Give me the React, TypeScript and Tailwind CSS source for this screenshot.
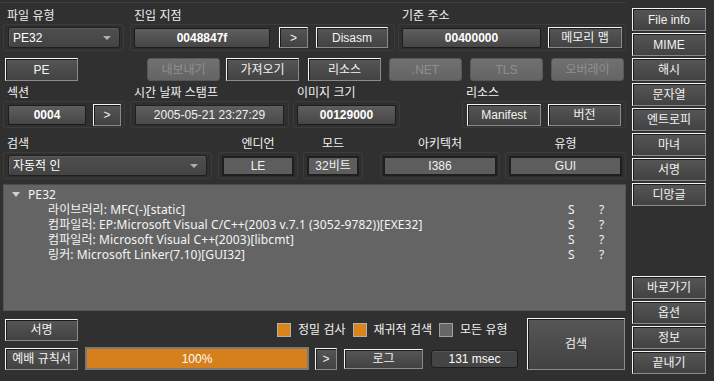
import React from 'react';

const FONT = "font-['Liberation_Sans','Noto_Sans_CJK_KR',sans-serif]";

function Btn({ children, className = '' }: { children: React.ReactNode; className?: string }) {
  return (
    <div className={`flex items-center justify-center shrink-0 border border-t-[#f4f4f4] border-l-[#f4f4f4] border-r-[#8a8a8a] border-b-[#8a8a8a] bg-gradient-to-b from-[#565656] to-[#424242] shadow-[inset_1px_1px_0_#1c1c1c] text-[12px] text-[#f2f2f2] leading-none ${className}`}>
      {children}
    </div>
  );
}

function Off({ children, className = '' }: { children: React.ReactNode; className?: string }) {
  return (
    <div className={`flex items-center justify-center shrink-0 rounded-[3px] border border-[#585858] bg-gradient-to-b from-[#717171] to-[#646464] text-[12px] text-[#8f8f8f] leading-none ${className}`}>
      {children}
    </div>
  );
}

function Edit({ children, className = '' }: { children: React.ReactNode; className?: string }) {
  return (
    <div className={`flex items-center justify-center shrink-0 rounded-[2px] border border-[#1c1c1c] bg-gradient-to-b from-[#5e5e5e] to-[#464646] text-[12px] font-bold text-white leading-none ${className}`}>
      {children}
    </div>
  );
}

function Ro({ children, className = '' }: { children: React.ReactNode; className?: string }) {
  return (
    <div className={`flex items-center justify-center shrink-0 border-2 border-[#1f1f1f] bg-[#5d5d5d] text-[12px] text-[#f0f0f0] leading-none ${className}`}>
      {children}
    </div>
  );
}

function Combo({ children, className = '' }: { children: React.ReactNode; className?: string }) {
  return (
    <div className={`flex items-center shrink-0 rounded-[3px] border border-[#1f1f1f] bg-gradient-to-b from-[#4f4f4f] to-[#434343] shadow-[inset_1px_1px_0_#5c5c5c] text-[12px] text-white pl-[4px] pr-[8px] leading-none ${className}`}>
      <span className="flex-1">{children}</span>
      <span className="w-0 h-0 border-l-[4px] border-r-[4px] border-t-[4px] border-l-transparent border-r-transparent border-t-[#b0b0b0]" />
    </div>
  );
}

function Group({ label, center, className = '', children }: { label: string; center?: boolean; className?: string; children: React.ReactNode }) {
  return (
    <div className={`shrink-0 ${className}`}>
      <div className={`h-[15px] leading-[15px] text-[12px] text-[#f0f0f0] ${center ? 'text-center' : 'pl-[4px]'}`}>{label}</div>
      <div className="h-[27px] flex items-center rounded-[3px] border border-[#3c3c3c]">{children}</div>
    </div>
  );
}

function Check({ on, label, className = '' }: { on: boolean; label: string; className?: string }) {
  return (
    <div className={`flex items-center shrink-0 ${className}`}>
      <span className={`w-[14px] h-[14px] border ${on ? 'bg-[#d9841c] border-[#b0b0b0]' : 'bg-[#666666] border-[#a0a0a0]'}`} />
      <span className="ml-[7px] text-[12px] text-[#f0f0f0] leading-none">{label}</span>
    </div>
  );
}

const rows = [
  '라이브러리: MFC(-)[static]',
  '컴파일러: EP:Microsoft Visual C/C++(2003 v.7.1 (3052-9782))[EXE32]',
  '컴파일러: Microsoft Visual C++(2003)[libcmt]',
  '링커: Microsoft Linker(7.10)[GUI32]',
];

export default function App() {
  const side1 = ['File info', 'MIME', '해시', '문자열', '엔트로피', '마녀', '서명', '디망글'];
  const side2 = ['바로가기', '옵션', '정보', '끝내기'];
  return (
    <div className={`w-[714px] h-[381px] bg-[#303030] flex overflow-hidden ${FONT}`}>
      {/* main panel */}
      <div className="w-[627px] flex flex-col">
        <div className="mt-[2px] h-[1px] bg-[#3e3e3e] mr-[1px]" />
        {/* row 1 */}
        <div className="flex mt-[6px]">
          <Group label="파일 유형" className="ml-[3px] w-[121px]">
            <Combo className="ml-[4px] w-[112px] h-[21px]">PE32</Combo>
          </Group>
          <Group label="진입 지점" className="ml-[6px] w-[265px]">
            <Edit className="ml-[3px] w-[136px] h-[20px]">0048847f</Edit>
            <Btn className="ml-[9px] w-[29px] h-[21px]">&gt;</Btn>
            <Btn className="ml-[8px] w-[72px] h-[21px]">Disasm</Btn>
          </Group>
          <Group label="기준 주소" className="ml-[3px] w-[228px]">
            <Edit className="ml-[3px] w-[139px] h-[20px]">00400000</Edit>
            <Btn className="ml-[7px] w-[74px] h-[21px]">메모리 맵</Btn>
          </Group>
        </div>
        {/* row 2 */}
        <div className="flex mt-[7px] h-[23px]">
          <Btn className="ml-[5px] w-[73px] h-[23px]">PE</Btn>
          <Off className="ml-[69px] w-[73px] h-[23px]">내보내기</Off>
          <Btn className="ml-[6px] w-[73px] h-[23px]">가져오기</Btn>
          <Btn className="ml-[9px] w-[73px] h-[23px]">리소스</Btn>
          <Off className="ml-[8px] w-[73px] h-[23px]">.NET</Off>
          <Off className="ml-[8px] w-[73px] h-[23px]">TLS</Off>
          <Off className="ml-[8px] w-[73px] h-[23px]">오버레이</Off>
        </div>
        {/* row 3 */}
        <div className="flex mt-[5px]">
          <Group label="섹션" className="ml-[3px] w-[122px]">
            <Edit className="ml-[4px] w-[78px] h-[20px]">0004</Edit>
            <Btn className="ml-[7px] w-[28px] h-[22px]">&gt;</Btn>
          </Group>
          <Group label="시간 날짜 스탬프" className="ml-[5px] w-[159px]">
            <Ro className="ml-[4px] w-[149px] h-[20px] !border !bg-gradient-to-b from-[#5e5e5e] to-[#4a4a4a]">2005-05-21 23:27:29</Ro>
          </Group>
          <Group label="이미지 크기" className="ml-[4px] w-[107px]">
            <Edit className="ml-[3px] w-[99px] h-[20px]">00129000</Edit>
          </Group>
          <Group label="리소스" className="ml-[62px] w-[164px]">
            <Btn className="ml-[4px] w-[74px] h-[22px]">Manifest</Btn>
            <Btn className="ml-[7px] w-[73px] h-[22px]">버전</Btn>
          </Group>
        </div>
        {/* row 4 */}
        <div className="flex mt-[9px]">
          <Group label="검색" className="ml-[3px] w-[209px]">
            <Combo className="ml-[4px] w-[199px] h-[21px]">자동적 인</Combo>
          </Group>
          <Group label="엔디언" center className="ml-[6px] w-[80px]">
            <Ro className="ml-[3px] w-[72px] h-[20px]">LE</Ro>
          </Group>
          <Group label="모드" center className="ml-[5px] w-[60px]">
            <Ro className="ml-[3px] w-[52px] h-[20px]">32비트</Ro>
          </Group>
          <Group label="아키텍처" center className="ml-[17px] w-[120px]">
            <Ro className="ml-[2px] w-[114px] h-[20px]">I386</Ro>
          </Group>
          <Group label="유형" center className="ml-[5px] w-[121px]">
            <Ro className="ml-[3px] w-[113px] h-[20px]">GUI</Ro>
          </Group>
        </div>
        {/* results */}
        <div className="ml-[3px] mt-[5px] w-[623px] h-[127px] bg-[#646464] border border-[#555555] border-t-[#4a4a4a] pt-[2px] font-['Noto_Sans','Noto_Sans_CJK_KR',sans-serif] text-[12px] text-[#f4f4f4] leading-[15px] tracking-[0.1px]">
          <div className="flex items-center h-[15px]">
            <span className="ml-[8px] w-0 h-0 border-l-[4px] border-r-[4px] border-t-[5px] border-l-transparent border-r-transparent border-t-[#d0d0d0]" />
            <span className="ml-[8px]">PE32</span>
          </div>
          {rows.map((r) => (
            <div key={r} className="flex h-[15px] overflow-hidden">
              <span className="ml-[44px] w-[520px] whitespace-nowrap">{r}</span>
              <span className="w-[31px]">S</span>
              <span>?</span>
            </div>
          ))}
        </div>
        {/* bottom */}
        <div className="flex mt-[7px]">
          <div className="w-[520px] flex flex-col">
            <div className="flex items-center h-[24px]">
              <Btn className="ml-[5px] w-[73px] h-[22px]">서명</Btn>
              <Check on label="정밀 검사" className="ml-[199px]" />
              <Check on label="재귀적 검색" className="ml-[7px]" />
              <Check on={false} label="모든 유형" className="ml-[7px]" />
            </div>
            <div className="flex items-center mt-[5px] h-[23px]">
              <Btn className="ml-[5px] w-[73px] h-[22px]">예배 규칙서</Btn>
              <div className="ml-[7px] w-[224px] h-[23px] border-2 border-[#7a7a7a] bg-[#d5801b] flex items-center justify-center text-[12px] text-white leading-none">100%</div>
              <Btn className="ml-[6px] w-[22px] h-[22px]">&gt;</Btn>
              <Btn className="ml-[7px] w-[79px] h-[20px]">로그</Btn>
              <div className="ml-[8px] w-[87px] h-[18px] rounded-[3px] border border-[#1e1e1e] bg-[#444444] shadow-[inset_0_1px_0_#555555] flex items-center justify-center text-[12px] text-white leading-none">131 msec</div>
            </div>
          </div>
          <Btn className="ml-[7px] w-[98px] h-[52px]">검색</Btn>
        </div>
      </div>
      {/* side column */}
      <div className="ml-[5px] w-[74px] flex flex-col pt-[8px] pb-[7px]">
        <div className="flex flex-col gap-[2px]">
          {side1.map((s) => (
            <Btn key={s} className="w-[74px] h-[23px]">{s}</Btn>
          ))}
        </div>
        <div className="mt-auto flex flex-col gap-[2px]">
          {side2.map((s) => (
            <Btn key={s} className="w-[74px] h-[23px]">{s}</Btn>
          ))}
        </div>
      </div>
    </div>
  );
}
